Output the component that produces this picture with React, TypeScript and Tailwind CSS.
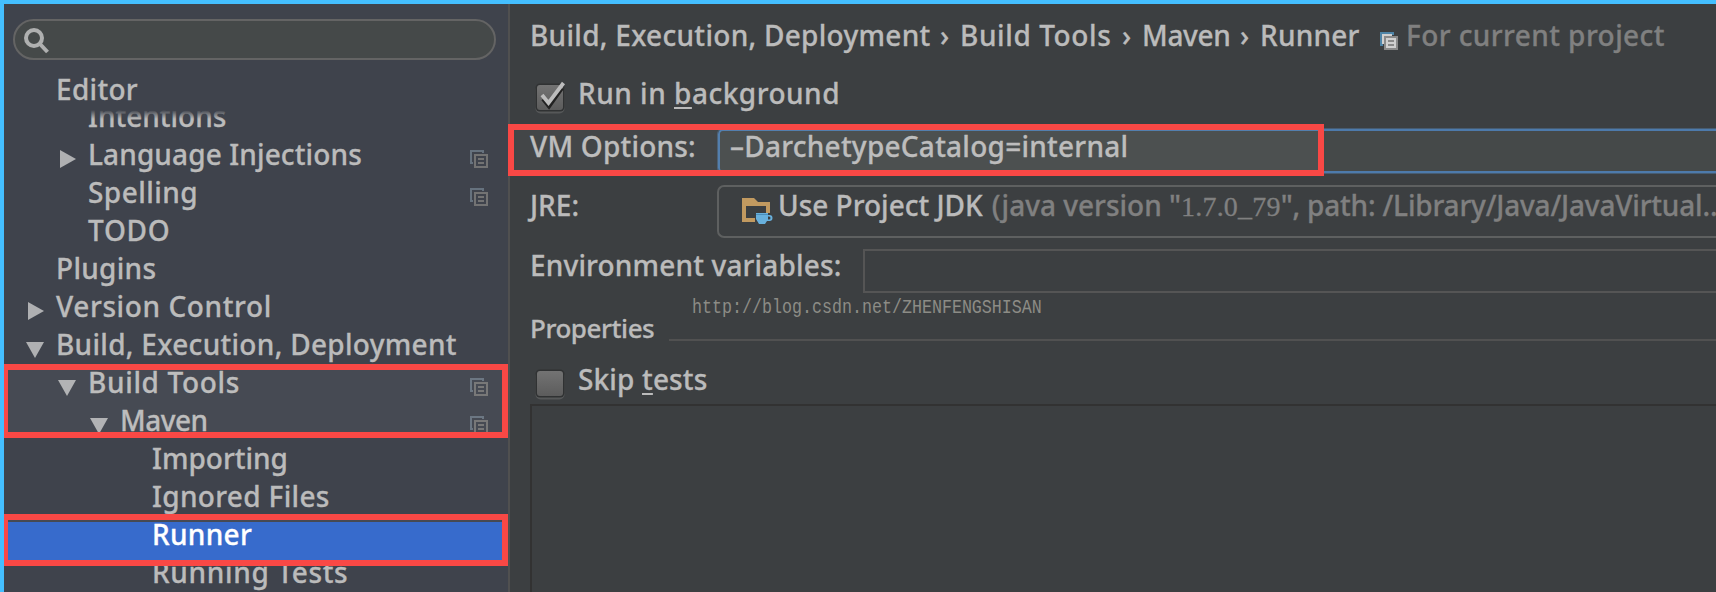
import React from "react";

type RowProps = {
  label: string;
  indent: string;
  tracking?: string;
  arrow?: "right" | "down";
  copy?: boolean;
  tone?: string;
};

function CopyIcon({ back, front, fill }: { back: string; front: string; fill?: string }) {
  return (
    <svg width="18" height="18" viewBox="0 0 18 18" className="block shrink-0" shapeRendering="crispEdges">
      <path d="M13 3V1H1v12h2" fill="none" stroke={back} strokeWidth="2" />
      {fill && <path d="M2 2h10v2H4v8H2z" fill={fill} />}
      <rect x="5" y="5" width="12" height="12" fill={fill ?? "none"} stroke={front} strokeWidth="2" />
      <path d="M8 9h6M8 13h6" stroke={front} strokeWidth="2" />
    </svg>
  );
}

function Arrow({ dir }: { dir: "right" | "down" }) {
  return (
    <svg width="20" height="18" viewBox="0 0 20 18" className="block shrink-0">
      {dir === "right" ? <path d="M3 0v18l16-9z" fill="#afb0b2" /> : <path d="M1 2h18l-9 16z" fill="#afb0b2" />}
    </svg>
  );
}

function Row({ label, indent, tracking = "", arrow, copy, tone = "" }: RowProps) {
  return (
    <div className={`flex h-[38px] shrink-0 pr-5 ${indent} ${tone}`}>
      <div className="w-[31px] shrink-0 pt-[8px]">{arrow && <Arrow dir={arrow} />}</div>
      <span className={`-mt-[6px] flex-1 whitespace-nowrap leading-[36px] ${tracking}`}>{label}</span>
      {copy && (
        <div className="pt-[8px]">
          <CopyIcon back="#66727e" front="#737373" />
        </div>
      )}
    </div>
  );
}

function Checkbox({ checked }: { checked?: boolean }) {
  return (
    <svg width="34" height="36" viewBox="0 0 34 36" className="block shrink-0">
      <defs>
        <linearGradient id="box" x1="0" y1="0" x2="0" y2="1">
          <stop offset="0" stopColor="#737373" />
          <stop offset="1" stopColor="#5c5c5c" />
        </linearGradient>
      </defs>
      <rect x="1.5" y="5" width="29" height="28.5" rx="5" fill="#565859" />
      <rect x="1.5" y="3.500" width="29" height="28" rx="4.5" fill="#303233" />
      <rect x="3" y="5" width="26" height="25" rx="3" fill="url(#box)" />
      {checked && (
        <>
          <path d="M9 19l6 7.500L28 8" fill="none" stroke="#222222" strokeWidth="4" />
          <path d="M8 15l6.500 8L29.500 3" fill="none" stroke="#bdbdbd" strokeWidth="3.800" />
        </>
      )}
    </svg>
  );
}

function JdkIcon() {
  return (
    <svg width="32" height="30" viewBox="0 0 32 30" className="block shrink-0">
      <path fillRule="evenodd" d="M0 0h12l4 4h12v20H0zM4 8v12h20V8z" fill="#c29a60" />
      <rect x="13" y="14" width="15" height="10" fill="#3c3f41" />
      <path d="M24 8h4v7h-4z" fill="#c29a60" />
      <path fillRule="evenodd" d="M14 15h12v2h1.500a3 3 0 0 1 0 6H25l-2 3h-6l-3-5zM26 18.500v3h1a1.500 1.500 0 0 0 0-3z" fill="#68b0dc" />
      <path d="M14 16.500h12" stroke="#4b8fbb" strokeWidth="1" />
    </svg>
  );
}

export default function App() {
  return (
    <div className="relative flex h-[592px] w-[1716px] overflow-hidden border-l-4 border-t-4 border-[#44bfff] bg-[#3c3f41] font-['Noto_Sans',sans-serif] text-[28px] font-medium text-[#bbbbbb] [-webkit-text-stroke:0.3px_currentColor]">
      <aside className="flex w-[504px] shrink-0 flex-col bg-[#3f434c]">
        <div className="ml-[9px] mt-[15px] flex h-[41px] w-[483px] shrink-0 items-center rounded-full border-2 border-[#646464] bg-[#454949] pl-[9px] pt-[3px]">
          <svg width="26" height="26" viewBox="0 0 26 26" className="block">
            <circle cx="10" cy="10" r="8" fill="none" stroke="#afb0b0" strokeWidth="4" />
            <path d="M15.500 15.500l8 8.500" stroke="#afb0b0" strokeWidth="4" />
          </svg>
        </div>
        <div className="mt-[7px] h-[43px] shrink-0 pl-[52px] leading-[44px] tracking-[0.3px]">Editor</div>
        <div className="relative h-[32px] shrink-0 overflow-hidden pl-[84px]">
          <span className="-mt-[13px] block leading-[38px]">Intentions</span>
          <div className="absolute inset-x-0 top-0 h-[9px] bg-linear-to-b from-[#3f434c] to-[#3f434c00]" />
        </div>
        <Row label="Language Injections" indent="pl-[53px]" tracking="tracking-[0.12px]" arrow="right" copy />
        <Row label="Spelling" indent="pl-[53px]" tracking="tracking-[0.45px]" copy />
        <Row label="TODO" indent="pl-[53px]" tracking="tracking-[0.7px]" />
        <Row label="Plugins" indent="pl-[21px]" tracking="tracking-[0.3px]" />
        <Row label="Version Control" indent="pl-[21px]" tracking="tracking-[0.6px]" arrow="right" />
        <Row label="Build, Execution, Deployment" indent="pl-[21px]" tracking="tracking-[0.3px]" arrow="down" />
        <Row label="Build Tools" indent="pl-[53px]" tracking="tracking-[0.65px]" arrow="down" copy />
        <Row label="Maven" indent="pl-[85px]" tracking="tracking-[-0.5px]" arrow="down" copy />
        <Row label="Importing" indent="pl-[117px]" />
        <Row label="Ignored Files" indent="pl-[117px]" tracking="tracking-[0.33px]" />
        <Row label="Runner" indent="pl-[117px]" tracking="tracking-[0.3px]" tone="bg-[#2f65ca] text-white" />
        <Row label="Running Tests" indent="pl-[117px]" tracking="tracking-[0.65px]" />
      </aside>

      <main className="flex w-[1208px] shrink-0 flex-col border-l-2 border-[#505050] pl-5">
        <div className="mt-[9px] flex h-[45px] shrink-0 whitespace-nowrap leading-[44px]">
          <div className="flex w-[850px]">
            <span className="w-[410px] tracking-[0.29px]">Build, Execution, Deployment</span>
            <span className="w-[20px]">›</span>
            <span className="w-[162px] tracking-[0.6px]">Build Tools</span>
            <span className="w-[20px]">›</span>
            <span className="w-[98px] tracking-[-0.3px]">Maven</span>
            <span className="w-[20px]">›</span>
            <span className="tracking-[0.2px]">Runner</span>
          </div>
          <div className="w-[26px] pt-[19px]">
            <CopyIcon back="#4f85a8" front="#8a8a8a" fill="#d0d0d0" />
          </div>
          <span className="tracking-[0.42px] text-[#808080]">For current project</span>
        </div>
        <div className="mt-[12px] flex h-[48px] shrink-0 leading-[46px]">
          <div className="ml-[4px] w-[44px] pt-[10px]">
            <Checkbox checked />
          </div>
          <span className="tracking-[0.5px]">
            Run in <u className="decoration-2 underline-offset-[3px]">b</u>ackground
          </span>
        </div>
        <div className="mt-[10px] flex h-[46px] shrink-0 whitespace-nowrap">
          <span className="w-[188px] leading-[36px] tracking-[0.2px]">VM Options:</span>
          <div className="mt-[1px] h-[44px] flex-1 rounded-l-[5px] border-2 border-r-0 border-[#4d7aab] bg-[#454949] pl-[10px] leading-[30px] tracking-[0.25px] outline outline-1 outline-[#465c72]">
            –DarchetypeCatalog=internal
          </div>
        </div>
        <div className="mt-[11px] flex h-[53px] shrink-0 whitespace-nowrap leading-[40px]">
          <span className="w-[187px]">JRE:</span>
          <div className="flex h-[53px] flex-1 overflow-hidden rounded-l-[7px] border-2 border-r-0 border-[#5e6060] pl-[23px]">
            <div className="w-[36px] shrink-0 pt-[11px]">
              <JdkIcon />
            </div>
            <div className="flex leading-[36px]">
              <span>Use Project JDK</span>
              <span className="ml-[9px] text-[#808080]">
                (java version "<span className="font-['Liberation_Serif',serif] tracking-[0.2px]">1.7.0_79</span>
                <span className="tracking-[-0.18px]">", path: /Library/Java/JavaVirtual...</span>
              </span>
            </div>
          </div>
        </div>
        <div className="mt-[11px] flex h-[44px] shrink-0 whitespace-nowrap">
          <span className="w-[333px] leading-[32px] tracking-[0.16px]">Environment variables:</span>
          <div className="h-[44px] flex-1 border-2 border-r-0 border-[#555555]" />
        </div>
        <div className="mt-[14px] flex h-[44px] shrink-0 text-[26px] leading-[42px]">
          <span className="w-[139px] tracking-[-0.45px]">Properties</span>
          <div className="mt-[32px] h-[2px] flex-1 bg-[#515151]" />
        </div>
        <div className="mt-[5px] flex h-[48px] shrink-0 leading-[46px]">
          <div className="ml-[4px] w-[44px] pt-[10px]">
            <Checkbox />
          </div>
          <span className="tracking-[0.15px]">
            Skip <u className="decoration-2 underline-offset-[3px]">t</u>ests
          </span>
        </div>
        <div className="flex-1 border-l-2 border-t-2 border-[#323232]" />
      </main>

      <div className="absolute left-0 top-[360px] h-[74px] w-[504px] border-6 border-l-4 border-[#f94845] bg-white/4 bg-clip-padding" />
      <div className="absolute left-0 top-[510px] h-[52px] w-[504px] border-6 border-l-4 border-[#f94845] bg-white/4 bg-clip-padding" />
      <div className="absolute left-[504px] top-[120px] h-[52px] w-[816px] border-6 border-[#f94845] bg-white/4 bg-clip-padding" />
      <span className="absolute left-[688px] top-[291px] origin-left scale-y-120 whitespace-nowrap font-['Liberation_Mono',monospace] text-[16.67px] font-normal text-[#8c8c86] [-webkit-text-stroke:0]">
        http://blog.csdn.net/ZHENFENGSHISAN
      </span>
    </div>
  );
}
